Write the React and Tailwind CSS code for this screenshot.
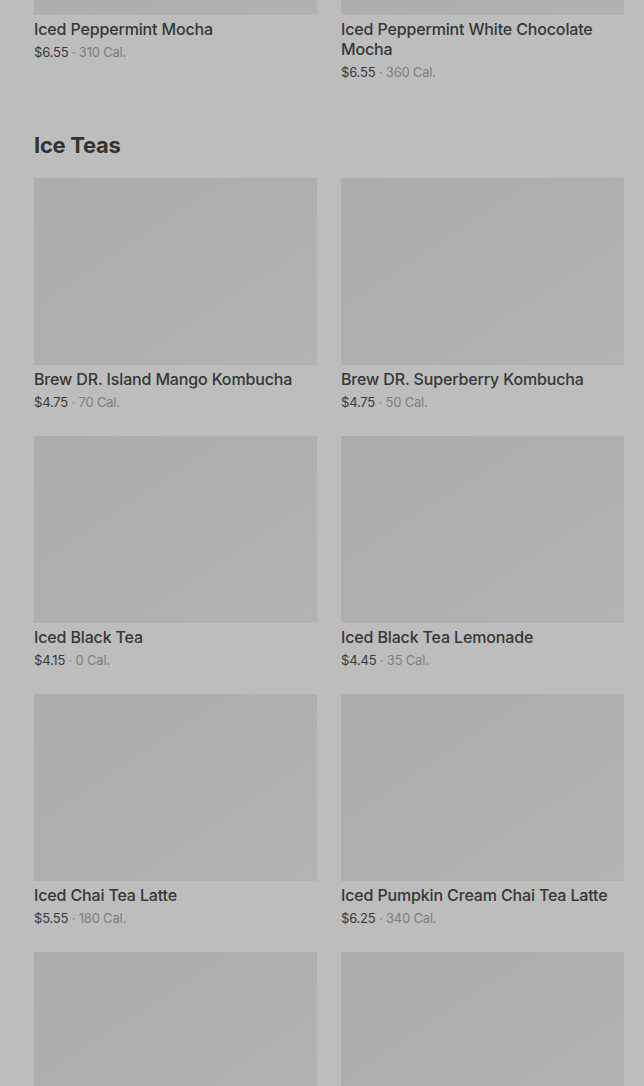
const topItems = [
  { name: "Iced Peppermint Mocha", price: "$6.55", cal: "310 Cal." },
  { name: "Iced Peppermint White Chocolate Mocha", price: "$6.55", cal: "360 Cal." },
];

const teas = [
  { name: "Brew DR. Island Mango Kombucha", price: "$4.75", cal: "70 Cal." },
  { name: "Brew DR. Superberry Kombucha", price: "$4.75", cal: "50 Cal." },
  { name: "Iced Black Tea", price: "$4.15", cal: "0 Cal." },
  { name: "Iced Black Tea Lemonade", price: "$4.45", cal: "35 Cal." },
  { name: "Iced Chai Tea Latte", price: "$5.55", cal: "180 Cal." },
  { name: "Iced Pumpkin Cream Chai Tea Latte", price: "$6.25", cal: "340 Cal." },
  { name: "", price: "", cal: "" },
  { name: "", price: "", cal: "" },
];

function Thumb({ className }) {
  return (
    <div
      className={
        "w-full bg-gradient-to-br from-[#acacac] via-[#afafaf] to-[#b3b3b3] " +
        className
      }
    />
  );
}

function Card({ item, imgClass }) {
  return (
    <div className="flex flex-col">
      <Thumb className={imgClass} />
      {item.name && (
        <div className="pt-[4px]">
          <p className="text-[16px] leading-[20px] font-medium tracking-[-0.15px] text-[#363636]">
            {item.name}
          </p>
          <p className="mt-[4px] text-[13px] leading-[18px] tracking-[-0.2px]">
            <span className="text-[#3a3a3a]">{item.price}</span>
            <span className="text-[#7e7e7e]"> · {item.cal}</span>
          </p>
        </div>
      )}
    </div>
  );
}

export default function App() {
  return (
    <div
      className="min-h-screen h-[1086px] overflow-hidden bg-[#bdbdbd] pl-[34px] pr-[20px]"
      style={{ fontFamily: "Inter, Roboto, 'Liberation Sans', sans-serif" }}
    >
      <div className="grid grid-cols-2 gap-x-[24px]">
        {topItems.map((it, i) => (
          <Card key={i} item={it} imgClass="h-[15px]" />
        ))}
      </div>

      <h2 className="mt-[50px] text-[22px] leading-[28px] font-bold text-[#333333] tracking-[-0.3px]">
        Ice Teas
      </h2>

      <div className="mt-[19px] grid grid-cols-2 gap-x-[24px] gap-y-[25px]">
        {teas.map((it, i) => (
          <Card key={i} item={it} imgClass="h-[187px]" />
        ))}
      </div>
    </div>
  );
}
